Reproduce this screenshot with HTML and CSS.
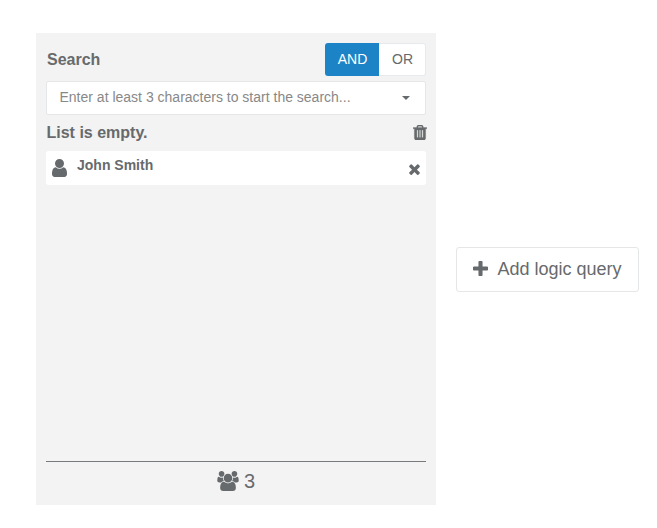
FILE: index.html
```html
<!DOCTYPE html>
<html lang="en">
<head>
<meta charset="utf-8">
<title>Logic query</title>
<link rel="stylesheet" href="styles.css">
</head>
<body>
<main class="builder">
  <section class="panel">
    <header class="panel-head">
      <h2 class="title">Search</h2>
      <div class="toggle">
        <button class="toggle-option active">AND</button>
        <button class="toggle-option">OR</button>
      </div>
    </header>
    <div class="select">
      <span class="placeholder">Enter at least 3 characters to start the search...</span>
      <span class="caret"></span>
    </div>
    <div class="list-head">
      <h3 class="list-title">List is empty.</h3>
      <svg class="icon icon-trash" viewBox="192 128 1408 1536"><path d="M704 1376v-704q0-14-9-23t-23-9h-64q-14 0-23 9t-9 23v704q0 14 9 23t23 9h64q14 0 23-9t9-23zm256 0v-704q0-14-9-23t-23-9h-64q-14 0-23 9t-9 23v704q0 14 9 23t23 9h64q14 0 23-9t9-23zm256 0v-704q0-14-9-23t-23-9h-64q-14 0-23 9t-9 23v704q0 14 9 23t23 9h64q14 0 23-9t9-23zm-544-992h448l-48-117q-7-9-17-11h-317q-10 2-17 11zm928 32v64q0 14-9 23t-23 9h-96v948q0 83-47 143.5t-113 60.5h-832q-66 0-113-58.5t-47-141.5v-952h-96q-14 0-23-9t-9-23v-64q0-14 9-23t23-9h309l70-167q15-37 54-63t79-26h320q40 0 79 26t54 63l70 167h309q14 0 23 9t9 23z"/></svg>
    </div>
    <div class="person">
      <svg class="icon icon-user" viewBox="256 128 1280 1536"><path d="M1536 1399q0 109-62.5 187t-150.5 78h-854q-88 0-150.5-78t-62.5-187q0-85 8.5-160.5t31.5-152 58.5-131 94-89 134.5-34.5q131 128 313 128t313-128q76 0 134.5 34.5t94 89 58.5 131 31.5 152 8.5 160.5zm-256-887q0 159-112.5 271.5t-271.5 112.5-271.5-112.5-112.5-271.5 112.5-271.5 271.5-112.5 271.5 112.5 112.5 271.5z"/></svg>
      <span class="person-name">John Smith</span>
      <svg class="icon icon-remove" viewBox="302 334 1188 1220"><path d="M1490 1322q0 40-28 68l-136 136q-28 28-68 28t-68-28l-294-294-294 294q-28 28-68 28t-68-28l-136-136q-28-28-28-68t28-68l294-294-294-294q-28-28-28-68t28-68l136-136q28-28 68-28t68 28l294 294 294-294q28-28 68-28t68 28l136 136q28 28 28 68t-28 68l-294 294 294 294q28 28 28 68z"/></svg>
    </div>
    <footer class="panel-foot">
      <svg class="icon icon-users" viewBox="-64 0 1920 1792"><path d="M529 896q-162 5-265 128h-134q-82 0-138-40.5t-56-118.5q0-353 124-353 6 0 43.5 21t97.5 42.5 119 21.5q67 0 133-23-5 37-5 66 0 139 81 256zm1071 637q0 120-73 189.5t-194 69.5h-874q-121 0-194-69.5t-73-189.5q0-53 3.5-103.5t14-109 26.5-108.5 43-97.5 62-81 85.5-53.5 111.5-20q10 0 43 21.5t73 48 107 48 135 21.5 135-21.5 107-48 73-48 43-21.5q61 0 111.5 20t85.5 53.5 62 81 43 97.5 26.5 108.5 14 109 3.5 103.5zm-1024-1277q0 106-75 181t-181 75-181-75-75-181 75-181 181-75 181 75 75 181zm704 384q0 159-112.5 271.5t-271.5 112.5-271.5-112.5-112.5-271.5 112.5-271.5 271.5-112.5 271.5 112.5 112.5 271.5zm576 225q0 78-56 118.5t-138 40.5h-134q-103-123-265-128 81-117 81-256 0-29-5-66 66 23 133 23 59 0 119-21.5t97.5-42.5 43.5-21q124 0 124 353zm-128-609q0 106-75 181t-181 75-181-75-75-181 75-181 181-75 181 75 75 181z"/></svg>
      <span class="count">3</span>
    </footer>
  </section>
  <button class="add">
    <svg class="icon icon-plus" viewBox="192 128 1408 1408"><path d="M1600 736v192q0 40-28 68t-68 28h-416v416q0 40-28 68t-68 28h-192q-40 0-68-28t-28-68v-416h-416q-40 0-68-28t-28-68v-192q0-40 28-68t68-28h416v-416q0-40 28-68t68-28h192q40 0 68 28t28 68v416h416q40 0 68 28t28 68z"/></svg>
    <span class="add-label">Add logic query</span>
  </button>
</main>
</body>
</html>
```
FILE: styles.css
```css
* { box-sizing: border-box; }

body {
  margin: 0;
  background: #fff;
  color: #676a6c;
  font-family: "Liberation Sans", Arial, sans-serif;
  font-size: 14px;
}

button { font: inherit; color: inherit; padding: 0; }
h2, h3 { margin: 0; font-size: 16px; line-height: 18px; }
.icon { display: block; flex: none; fill: currentColor; }

.builder {
  display: flex;
  align-items: center;
  gap: 20px;
  padding: 33px 0 0 36px;
}

.panel {
  display: flex;
  flex-direction: column;
  width: 400px;
  height: 472px;
  padding: 10px;
  background: #f3f3f3;
}

.panel-head { display: flex; justify-content: space-between; height: 33px; }
.title { padding: 8px 0 0 1px; }
.toggle { display: flex; }

.toggle-option {
  width: 47px;
  height: 33px;
  padding: 0 0 2px 1px;
  border: 1px solid #e7eaec;
  border-left: 0;
  border-radius: 0 3px 3px 0;
  background: #fff;
}

.toggle-option.active {
  width: 54px;
  border: 0;
  border-radius: 3px 0 0 3px;
  background: #1c84c6;
  color: #fff;
}

.select {
  display: flex;
  align-items: center;
  justify-content: space-between;
  height: 34px;
  margin-top: 5px;
  padding: 0 15px 2px 12.5px;
  border: 1px solid #e5e6e7;
  border-radius: 2px;
  background: #fff;
}

.placeholder { color: #888; }

.caret {
  margin-top: 2px;
  border: 4px solid transparent;
  border-top-color: #676a6c;
  border-bottom: 0;
}

.list-head {
  display: flex;
  justify-content: space-between;
  height: 36px;
  padding: 9px 0 0 0.5px;
}

.icon-trash {
  width: 14px;
  height: 15px;
  margin: 1px -1px 0 0;
  stroke: currentColor;
  stroke-width: 30;
}

.person {
  display: flex;
  height: 34px;
  padding: 0 6px;
  border-radius: 3px;
  background: #fff;
}

.icon-user { width: 15px; height: 18px; margin-top: 8px; }
.person-name { flex: 1; padding: 6px 0 0 10px; font-weight: bold; line-height: 16px; }
.icon-remove { width: 11px; height: 11px; margin-top: 12.5px; }

.panel-foot {
  display: flex;
  justify-content: center;
  gap: 5px;
  height: 34px;
  margin-top: auto;
  border-top: 1px solid #777b7d;
  font-size: 20px;
}

.icon-users { width: 22px; height: 20px; margin-top: 9px; }
.count { padding-top: 8px; line-height: 23px; }

.add {
  display: flex;
  align-items: center;
  width: 183px;
  height: 45px;
  padding: 0 0 1px 16px;
  border: 1px solid #e5e6e7;
  border-radius: 3px;
  background: #fff;
  font-size: 18px;
}

.icon-plus { width: 15px; height: 15px; margin-right: 9.5px; }
.add-label { padding-top: 2px; }
```
